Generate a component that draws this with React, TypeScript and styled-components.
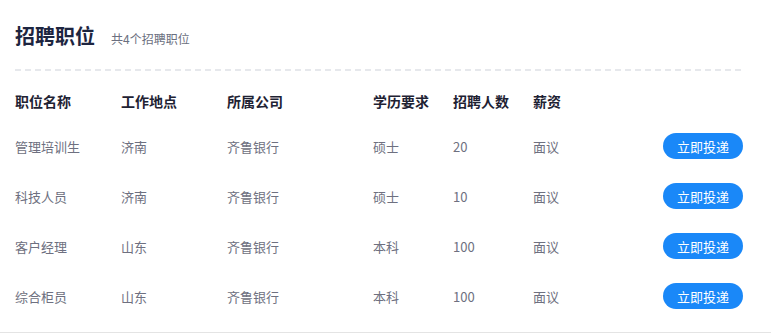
import React from "react";
import styled, { createGlobalStyle } from "styled-components";

const Global = createGlobalStyle`
  html, body { margin: 0; padding: 0; background: #fff; }
  body { font-family: "Noto Sans CJK SC", "Noto Sans", sans-serif; }
`;

const Panel = styled.section`
  width: 771px;
  box-sizing: border-box;
  padding: 20px 28px 11px 15px;
  border-bottom: 1px solid #e4e4e4;
`;

const TitleRow = styled.div`
  display: flex;
  align-items: baseline;
  height: 32px;
  line-height: 32px;
  gap: 16px;
`;

const Title = styled.h2`
  margin: 0;
  font-size: 20px;
  font-weight: 700;
  color: #1d2540;
`;

const Count = styled.span`
  font-size: 12px;
  color: #6b6f80;
`;

const Divider = styled.div`
  margin-top: 17px;
  height: 2px;
  background: repeating-linear-gradient(
    to right,
    #e6e8ec 0,
    #e6e8ec 6px,
    transparent 6px,
    transparent 10px
  );
`;

const Table = styled.div`
  margin-top: 10px;
  display: grid;
  grid-template-columns: 106px 106px 146px 80px 80px 1fr auto;
`;

const Head = styled.div`
  height: 40px;
  display: flex;
  align-items: center;
  font-size: 14px;
  font-weight: 700;
  color: #1e2233;
`;

const Cell = styled.div`
  height: 50px;
  display: flex;
  align-items: center;
  font-size: 13px;
  color: #6e7080;
`;

const ApplyButton = styled.button`
  width: 80px;
  height: 26px;
  border: none;
  border-radius: 13px;
  background: #1a88f8;
  color: #fff;
  font-family: inherit;
  font-size: 13px;
  padding: 0;
  cursor: pointer;
`;

const jobs = [
  { name: "管理培训生", place: "济南", company: "齐鲁银行", edu: "硕士", num: "20", pay: "面议" },
  { name: "科技人员", place: "济南", company: "齐鲁银行", edu: "硕士", num: "10", pay: "面议" },
  { name: "客户经理", place: "山东", company: "齐鲁银行", edu: "本科", num: "100", pay: "面议" },
  { name: "综合柜员", place: "山东", company: "齐鲁银行", edu: "本科", num: "100", pay: "面议" },
];

const heads = ["职位名称", "工作地点", "所属公司", "学历要求", "招聘人数", "薪资", ""];

export default function App() {
  return (
    <>
      <Global />
      <Panel>
        <TitleRow>
          <Title>招聘职位</Title>
          <Count>共4个招聘职位</Count>
        </TitleRow>
        <Divider />
        <Table>
          {heads.map((h, i) => (
            <Head key={i}>{h}</Head>
          ))}
          {jobs.map((j, i) => (
            <React.Fragment key={i}>
              <Cell>{j.name}</Cell>
              <Cell>{j.place}</Cell>
              <Cell>{j.company}</Cell>
              <Cell>{j.edu}</Cell>
              <Cell>{j.num}</Cell>
              <Cell>{j.pay}</Cell>
              <Cell>
                <ApplyButton>立即投递</ApplyButton>
              </Cell>
            </React.Fragment>
          ))}
        </Table>
      </Panel>
    </>
  );
}
